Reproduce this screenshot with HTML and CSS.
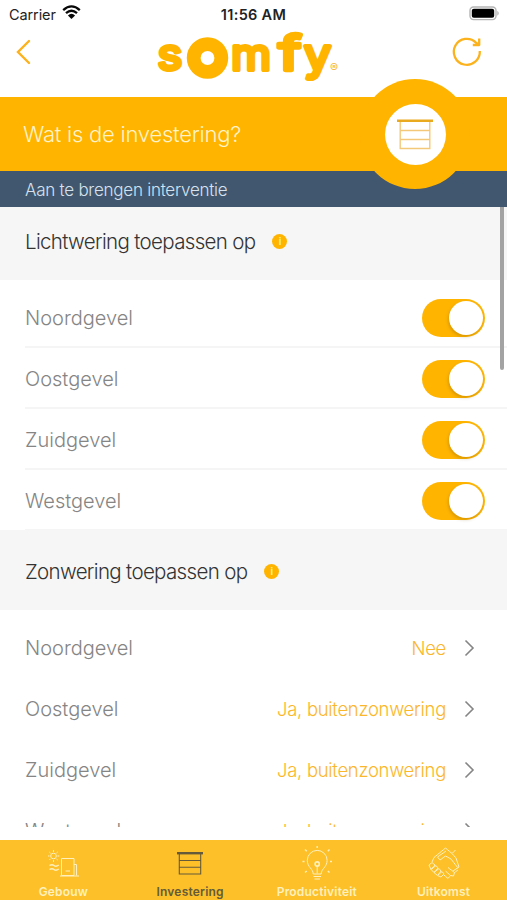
FILE: index.html
```html
<!DOCTYPE html>
<html lang="nl">
<head>
<meta charset="utf-8">
<title>Somfy</title>
<link rel="stylesheet" href="styles.css">
</head>
<body>
<div class="app">
  <div class="status">
    <div class="carrier"><span>Carrier</span>
      <svg width="19" height="15" viewBox="0 0 19 15"><path d="M1.2 5.2Q9.5-2.4 17.8 5.2M4 8.2Q9.5 3.2 15 8.2" fill="none" stroke="#080808" stroke-width="2.3"/><path d="M5.9 10.4Q9.5 7.3 13.1 10.4L9.5 14Z" fill="#080808"/></svg>
    </div>
    <span class="time">11:56 AM</span>
    <svg class="battery" width="31" height="15" viewBox="0 0 31 15"><rect x="1" y="1" width="26" height="12.6" rx="3.5" fill="#fff" stroke="#b5b5b5" stroke-width="1.4"/><rect x="2.8" y="2.8" width="22.4" height="9" rx="2" fill="#000"/><path d="M28.4 4.8Q31 7.3 28.4 9.8Z" fill="#aaa"/></svg>
  </div>
  <header class="header">
    <svg class="back" width="16" height="26" viewBox="0 0 16 26"><path d="M14 2 3 13 14 24" fill="none" stroke="#fcb21c" stroke-width="2.4" stroke-linecap="round"/></svg>
    <svg class="logo" width="188" height="54" viewBox="0 0 188 54" role="img" aria-label="somfy">
      <text class="logo-letter" transform="translate(4.5 42) scale(1.07 1)">s</text>
      <circle cx="54.5" cy="30" r="13.8" fill="none" stroke="#ffb400" stroke-width="13.8"/>
      <text class="logo-letter" transform="translate(78 42) scale(1.04 1)">m</text>
      <text class="logo-letter" transform="translate(125.5 42) scale(1.4 1.07)">f</text>
      <text class="logo-letter" transform="translate(151 42) scale(1.1 1)">y</text>
      <text class="logo-mark" x="177" y="44">®</text>
    </svg>
    <svg class="refresh" width="30" height="30" viewBox="0 0 30 30"><path d="M27.8 14A13 13 0 1 1 24 5.6L27.2 8M27.2 1.6V8H20.8" fill="none" stroke="#fcb21c" stroke-width="2.3" stroke-linejoin="round"/></svg>
  </header>
  <section class="banner">
    <h1>Wat is de investering?</h1>
    <div class="badge"><div class="badge-inner">
      <svg width="36" height="31" viewBox="0 0 36 31"><path d="M0 1.7H36" stroke="#e9aa20" stroke-width="2.5"/><path d="M3.2 3V29.5H32.8V3M3.2 11.5H32.8M3.2 20.5H32.8" fill="none" stroke="#f3c979" stroke-width="1.4"/></svg>
    </div></div>
  </section>
  <div class="subtitle">Aan te brengen interventie</div>
  <main class="list">
    <div class="scrollbar"></div>
    <div class="section first"><h2>Lichtwering toepassen op</h2><span class="info">i</span></div>
    <div class="switches">
      <div class="row switch-row"><span class="label">Noordgevel</span><span class="switch"></span></div>
      <div class="row switch-row"><span class="label">Oostgevel</span><span class="switch"></span></div>
      <div class="row switch-row"><span class="label">Zuidgevel</span><span class="switch"></span></div>
      <div class="row switch-row"><span class="label">Westgevel</span><span class="switch"></span></div>
    </div>
    <div class="section second"><h2>Zonwering toepassen op</h2><span class="info">i</span></div>
    <div class="choices">
      <div class="row"><span class="label">Noordgevel</span><span class="value">Nee</span><svg class="chevron" width="11" height="18" viewBox="0 0 11 18"><path d="M1.5 1.5 9 9 1.5 16.5"/></svg></div>
      <div class="row"><span class="label">Oostgevel</span><span class="value">Ja, buitenzonwering</span><svg class="chevron" width="11" height="18" viewBox="0 0 11 18"><path d="M1.5 1.5 9 9 1.5 16.5"/></svg></div>
      <div class="row"><span class="label">Zuidgevel</span><span class="value">Ja, buitenzonwering</span><svg class="chevron" width="11" height="18" viewBox="0 0 11 18"><path d="M1.5 1.5 9 9 1.5 16.5"/></svg></div>
      <div class="row"><span class="label">Westgevel</span><span class="value">Ja, buitenzonwering</span><svg class="chevron" width="11" height="18" viewBox="0 0 11 18"><path d="M1.5 1.5 9 9 1.5 16.5"/></svg></div>
    </div>
  </main>
  <nav class="tabs">
    <div class="tab">
      <svg width="34" height="34" viewBox="0 0 34 34"><circle cx="7.5" cy="6" r="2.8"/><path d="M7.5 0V2M7.5 10V12M2 6H3.5M11.5 6H13.3M3.3 2 4.5 3.2M11.8 1.8 10.5 3M3.3 10 4.5 8.8M11.8 10.2 10.5 9"/><path d="M3.5 15.5Q6 13.8 8 15.5T12.7 15M3.5 19.5Q6 17.8 8 19.5T12.7 19" stroke-width="1.5"/><path d="M15.5 25.5V8.5H28V25.5ZM28 14.5H30.5V25.5M19.5 21H24M14 26H33"/></svg>
      <span>Gebouw</span>
    </div>
    <div class="tab active">
      <svg width="34" height="34" viewBox="0 0 34 34"><path d="M4 3.2H30" stroke-width="2.4"/><path d="M6.3 4V24H27.7V4M6.3 10.5H27.7M6.3 17.3H27.7" stroke-width="1.1"/></svg>
      <span>Investering</span>
    </div>
    <div class="tab">
      <svg width="34" height="34" viewBox="0 0 34 34"><path d="M13.2 24C13.2 18.5 7.3 17.5 7.3 10.3A9.9 9.9 0 0 1 27.1 10.3C27.1 17.5 21.2 18.5 21.2 24ZM13.5 26.5H21M14.5 29H20M17.2 16V23.5"/><circle cx="17.2" cy="14" r="2.1" stroke-width="1.6"/><path d="M17.2-4V-2M5-.5 6.7 1.2M29.5-.5 27.8 1.2M2.5 11.5H4.5M30 11.5H32M5 22.5 6.7 21M29.5 22.5 27.8 21" stroke-width="1.4"/></svg>
      <span>Productiviteit</span>
    </div>
    <div class="tab">
      <svg width="34" height="34" viewBox="0 0 34 34"><path d="M7 7.5 18.5-2 25 3.5 28.5 0M25 3.5 29 8 32 17 26 21M18.5 6 13 10 10.5 7 19 1M18.5 6 24 9 31 18M2 15 5 12.5 8 15 4 19.5ZM4 19.5 9 15.5 11 18 7 22.5ZM7 22.5 12 18.5 14 21 10.5 25.5ZM10.5 25.5 15 21.5 17 24 14 27ZM17 25 21 28.5 23.5 25.5 18.5 21M23.5 25.5 26.5 26 27.5 22.5 21 17.5M27.5 22.5 31 20M7 7.5 5 12"/></svg>
      <span>Uitkomst</span>
    </div>
  </nav>
</div>
</body>
</html>
```
FILE: styles.css
```css
* { box-sizing: border-box; }
body { margin: 0; background: #fff; font-family: Inter, "Liberation Sans", sans-serif; }
svg { display: block; overflow: visible; flex: none; }
.app { width: 507px; height: 900px; display: flex; flex-direction: column; overflow: hidden; }
.status { height: 28px; flex: none; display: grid; grid-template-columns: 1fr auto 1fr; align-items: center; padding: 0 7px 0 9px; color: #222; font-size: 14.5px; }
.carrier { display: flex; gap: 6px; align-items: center; letter-spacing: -.1px; }
.carrier svg { margin-top: -3px; }
.time { font-weight: 600; font-size: 14.5px; letter-spacing: .3px; margin-right: 2px; }
.battery { justify-self: end; margin-top: -2px; }
.header { height: 69px; flex: none; display: flex; justify-content: space-between; align-items: flex-start; padding: 0 25px 0 15px; }
.back { margin-top: 11px; }
.refresh { margin-top: 9px; }
.logo { margin-left: 122px; margin-right: auto; }
.logo-letter { font-family: Inter, sans-serif; font-weight: 400; font-size: 44px; fill: #ffb400; stroke: #ffb400; stroke-width: 4px; stroke-linejoin: round; }
.logo-mark { font-size: 12px; fill: #f4b642; }
.banner { height: 74px; flex: none; background: #ffb400; display: flex; align-items: center; padding-left: 23px; position: relative; z-index: 2; }
h1, h2 { margin: 0; font-weight: 300; }
h1 { font-size: 22px; letter-spacing: -.23px; color: #fff3c9; }
.badge { position: absolute; left: 360px; top: -18px; width: 110px; height: 110px; border-radius: 50%; background: #ffb400; display: grid; place-items: center; }
.badge-inner { width: 61px; height: 61px; border-radius: 50%; background: #fff; display: grid; place-items: center; }
.subtitle { height: 36px; flex: none; background: #41576f; color: #d5e2ee; font-weight: 300; font-size: 17px; letter-spacing: -.25px; line-height: 38px; padding-left: 25px; }
.list { height: 620px; flex: none; overflow: hidden; position: relative; margin-bottom: 13px; }
.scrollbar { position: absolute; z-index: 1; right: 3px; top: 0; width: 4px; height: 163px; border-radius: 0 0 2px 2px; background: #a3a3a3; }
.section { background: #f6f6f6; display: flex; align-items: center; padding-left: 25px; color: #333; }
.first { height: 73px; padding-bottom: 4px; gap: 17px; }
.second { height: 80px; padding-top: 2px; gap: 17px; }
h2 { font-size: 20.5px; letter-spacing: -.66px; }
.info { width: 15px; height: 15px; border-radius: 50%; background: #ffb400; color: #fff0b8; font-size: 10px; line-height: 15px; text-align: center; font-weight: 600; }
.row { height: 61px; display: flex; align-items: center; padding: 0 32px 0 25px; color: #858585; font-size: 20px; font-weight: 300; }
.label { flex: 1; }
.switches { height: 250px; padding-top: 7px; }
.switch-row { padding-right: 22px; padding-top: 1px; background: linear-gradient(#f5f5f5, #f5f5f5) 25px 100% / 100% 2px no-repeat; }
.choices { padding-top: 7px; }
.choices .row:last-child { padding-top: 1px; }
.switch { width: 63px; height: 38px; border-radius: 19px; background: #ffb400; display: flex; justify-content: flex-end; padding: 2px; }
.switch::after { content: ""; width: 34px; height: 34px; border-radius: 50%; background: #fff; box-shadow: -1px 2px 3px rgba(120, 80, 0, .25); }
.value { color: #fbb72b; font-size: 18.5px; letter-spacing: -.3px; margin-right: 18px; }
.chevron path { fill: none; stroke: #858585; stroke-width: 1.6; }
.tabs { flex: 1; background: #fdc028; display: grid; grid-template-columns: repeat(4, 1fr); }
.tab { display: flex; flex-direction: column; align-items: center; padding-top: 10px; color: #fff0bd; font-size: 12px; font-weight: 600; letter-spacing: .2px; }
.tab svg { fill: none; stroke: currentColor; stroke-width: 1; }
.tab span { line-height: 15px; }
.active { color: #655b3a; }
```
